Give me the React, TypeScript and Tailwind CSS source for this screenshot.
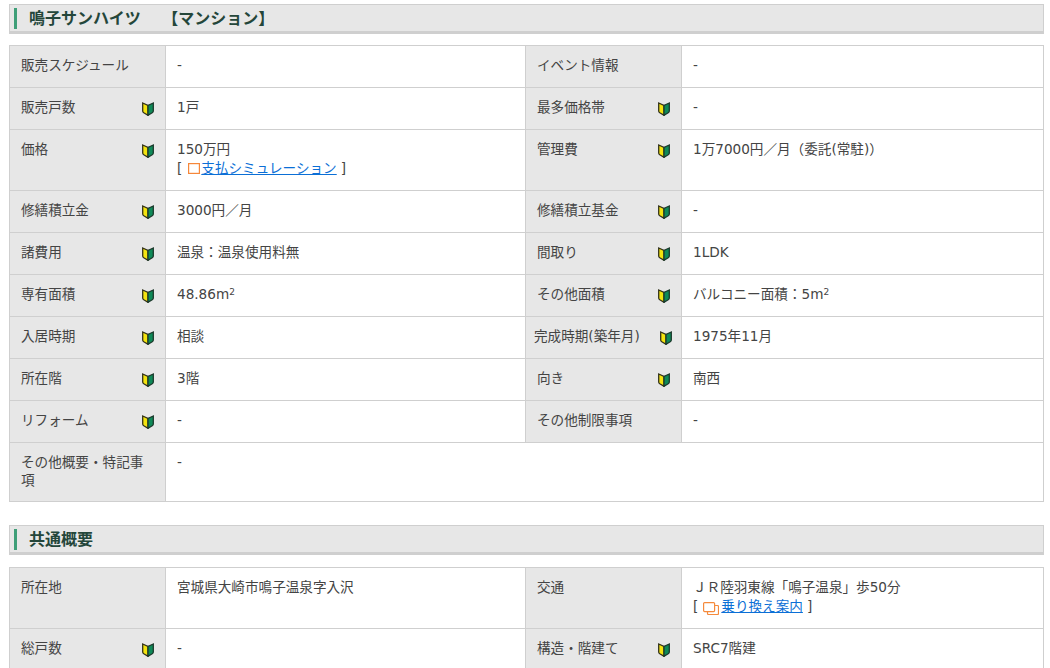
const Shoshinsha = () => (
  <svg width="12" height="14" viewBox="0 0 12 14" className="shrink-0">
    <path d="M0.7 1 L6 3.4 L6 13.3 L1.8 10.8 Q0.7 10 0.7 9 Z" fill="#f4e40f" stroke="#33331a" strokeWidth="1.3" />
    <path d="M11.3 1 L6 3.4 L6 13.3 L10.2 10.8 Q11.3 10 11.3 9 Z" fill="#0f8a58" stroke="#1c3a2c" strokeWidth="1.3" />
  </svg>
)

const SectionTitle = ({ children }: { children: React.ReactNode }) => (
  <div className="flex h-[30px] items-center border border-b-[3px] border-[#cfcfcf] bg-[#e7e7e7] pl-[4px]">
    <span className="h-[21px] w-[3px] bg-[#3f9f78]" />
    <h2 className="ml-[12px] whitespace-pre pt-px text-[16px] font-bold leading-none text-[#24463a]">{children}</h2>
  </div>
)

interface CellData {
  label: string
  badge?: boolean
  value: React.ReactNode
  tight?: boolean
}

const Label = ({ label, badge, tight }: CellData) => (
  <th className={`border border-[#cfcfcf] bg-[#e7e7e7] pb-[12px] pt-[10px] text-left align-top font-normal leading-[18px] ${tight ? 'pl-[8px] pr-[9px]' : 'pl-[11px] pr-[11px]'}`}>
    <div className="flex items-start justify-between">
      <span>{label}</span>
      {badge && <span className="mt-[4px]"><Shoshinsha /></span>}
    </div>
  </th>
)

const Value = ({ children, span }: { children: React.ReactNode; span?: number }) => (
  <td colSpan={span} className="border border-[#cfcfcf] bg-white px-[11px] pb-[11px] pt-[9px] align-top">
    {children}
  </td>
)

const PairRow = ({ left, right }: { left: CellData; right?: CellData }) => (
  <tr className="h-[42px]">
    <Label {...left} />
    <Value span={right ? undefined : 3}>{left.value}</Value>
    {right && <Label {...right} />}
    {right && <Value>{right.value}</Value>}
  </tr>
)

const LinkLine = ({ icon, text }: { icon: React.ReactNode; text: string }) => (
  <div className="-mt-px mb-px flex items-center">
    <span>[</span>
    {icon}
    <a href="#" className="text-[#0b6fd6] underline">{text}</a>
    <span className="ml-[4px]">]</span>
  </div>
)

const Sq = () => (
  <svg width="12" height="11" viewBox="0 0 12 11" className="ml-[6px] mr-px shrink-0">
    <rect x="0.6" y="0.6" width="10.8" height="9.8" fill="white" stroke="#f6873a" strokeWidth="1.2" />
  </svg>
)

const Windows = () => (
  <svg width="16" height="13" viewBox="0 0 16 13" className="ml-[5px] mr-[2px] mt-[4px]">
    <rect x="4.5" y="3.5" width="11" height="9" rx="1" fill="none" stroke="#f58a3c" strokeWidth="1.2" />
    <rect x="0.6" y="0.6" width="11" height="9" rx="1" fill="white" stroke="#f58a3c" strokeWidth="1.2" />
  </svg>
)

const M2 = ({ n }: { n: string }) => (
  <>{n}m<sup className="text-[9px]">2</sup></>
)

const rows: [CellData, CellData?][] = [
  [{ label: '販売スケジュール', value: '-' }, { label: 'イベント情報', value: '-' }],
  [{ label: '販売戸数', badge: true, value: '1戸' }, { label: '最多価格帯', badge: true, value: '-' }],
  [
    {
      label: '価格',
      badge: true,
      value: (
        <>
          <div>150万円</div>
          <LinkLine icon={<Sq />} text="支払シミュレーション" />
        </>
      ),
    },
    { label: '管理費', badge: true, value: '1万7000円／月（委託(常駐)）' },
  ],
  [{ label: '修繕積立金', badge: true, value: '3000円／月' }, { label: '修繕積立基金', badge: true, value: '-' }],
  [{ label: '諸費用', badge: true, value: '温泉：温泉使用料無' }, { label: '間取り', badge: true, value: '1LDK' }],
  [{ label: '専有面積', badge: true, value: <M2 n="48.86" /> }, { label: 'その他面積', badge: true, value: <>バルコニー面積：<M2 n="5" /></> }],
  [{ label: '入居時期', badge: true, value: '相談' }, { label: '完成時期(築年月)', badge: true, tight: true, value: '1975年11月' }],
  [{ label: '所在階', badge: true, value: '3階' }, { label: '向き', badge: true, value: '南西' }],
  [{ label: 'リフォーム', badge: true, value: '-' }, { label: 'その他制限事項', value: '-' }],
  [{ label: 'その他概要・特記事項', value: '-' }],
]

const commonRows: [CellData, CellData?][] = [
  [
    { label: '所在地', value: '宮城県大崎市鳴子温泉字入沢' },
    {
      label: '交通',
      value: (
        <>
          <div>ＪＲ陸羽東線「鳴子温泉」歩50分</div>
          <LinkLine icon={<Windows />} text="乗り換え案内" />
        </>
      ),
    },
  ],
  [{ label: '総戸数', badge: true, value: '-' }, { label: '構造・階建て', badge: true, value: 'SRC7階建' }],
]

const DetailTable = ({ data }: { data: [CellData, CellData?][] }) => (
  <table className="w-full table-fixed border-collapse text-[13.6px] leading-[20px] text-[#444]">
    <colgroup>
      <col className="w-[156px]" />
      <col className="w-[360px]" />
      <col className="w-[156px]" />
      <col />
    </colgroup>
    <tbody>
      {data.map(([left, right]) => (
        <PairRow key={left.label} left={left} right={right} />
      ))}
    </tbody>
  </table>
)

export default function App() {
  return (
    <div
      className="h-[668px] overflow-hidden bg-white pl-[9px] pr-[6px] pt-[4px]"
      style={{ fontFamily: '"DejaVu Sans", "Noto Sans CJK JP", sans-serif' }}
    >
      <SectionTitle>鳴子サンハイツ　 【マンション】</SectionTitle>
      <div className="mt-[11px]">
        <DetailTable data={rows} />
      </div>
      <div className="mt-[23px]">
        <SectionTitle>共通概要</SectionTitle>
      </div>
      <div className="mt-[12px]">
        <DetailTable data={commonRows} />
      </div>
    </div>
  )
}
